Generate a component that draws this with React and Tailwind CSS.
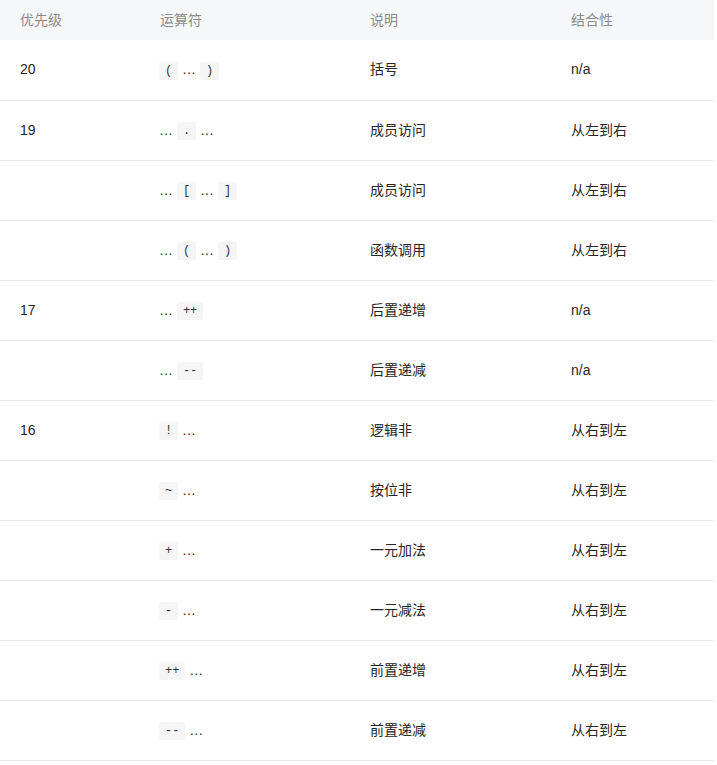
import React from "react";

const C = ({ children }) => (
  <code className="inline-block rounded-[2px] bg-[#f5f5f5] px-[6px] h-[18px] leading-[18px] align-middle text-[12px] text-[#333] [font-family:'Liberation_Mono',monospace]">
    {children}
  </code>
);

const rows = [
  ["20", <><C>(</C> … <C>)</C></>, "括号", "n/a"],
  ["19", <>… <C>.</C> …</>, "成员访问", "从左到右"],
  ["", <>… <C>[</C> … <C>]</C></>, "成员访问", "从左到右"],
  ["", <>… <C>(</C> … <C>)</C></>, "函数调用", "从左到右"],
  ["17", <>… <C>++</C></>, "后置递增", "n/a"],
  ["", <>… <C>--</C></>, "后置递减", "n/a"],
  ["16", <><C>!</C> …</>, "逻辑非", "从右到左"],
  ["", <><C>~</C> …</>, "按位非", "从右到左"],
  ["", <><C>+</C> …</>, "一元加法", "从右到左"],
  ["", <><C>-</C> …</>, "一元减法", "从右到左"],
  ["", <><C>++</C> …</>, "前置递增", "从右到左"],
  ["", <><C>--</C> …</>, "前置递减", "从右到左"],
];

export default function App() {
  return (
    <div className="w-[717px] bg-white [font-family:'Liberation_Sans','Noto_Sans_CJK_SC',sans-serif] text-[14px]">
      <table className="w-[714px] border-collapse table-fixed">
        <colgroup>
          <col className="w-[140px]" />
          <col className="w-[210px]" />
          <col className="w-[201px]" />
          <col className="w-[163px]" />
        </colgroup>
        <thead>
          <tr className="bg-[#f6f7f9] h-[40px] text-[#8c8c8c]">
            <th className="pl-[20px] text-left font-normal">优先级</th>
            <th className="pl-[20px] text-left font-normal">运算符</th>
            <th className="pl-[20px] text-left font-normal">说明</th>
            <th className="pl-[20px] text-left font-normal">结合性</th>
          </tr>
        </thead>
        <tbody className="text-[#262626]">
          {rows.map((r, i) => (
            <tr key={i} className="h-[60px] border-b border-[#e8e8e8]">
              <td className="pl-[20px] align-middle">{r[0]}</td>
              <td className="pl-[19px] align-middle whitespace-nowrap">{r[1]}</td>
              <td className="pl-[20px] align-middle">{r[2]}</td>
              <td className="pl-[20px] align-middle">{r[3]}</td>
            </tr>
          ))}
        </tbody>
      </table>
    </div>
  );
}
